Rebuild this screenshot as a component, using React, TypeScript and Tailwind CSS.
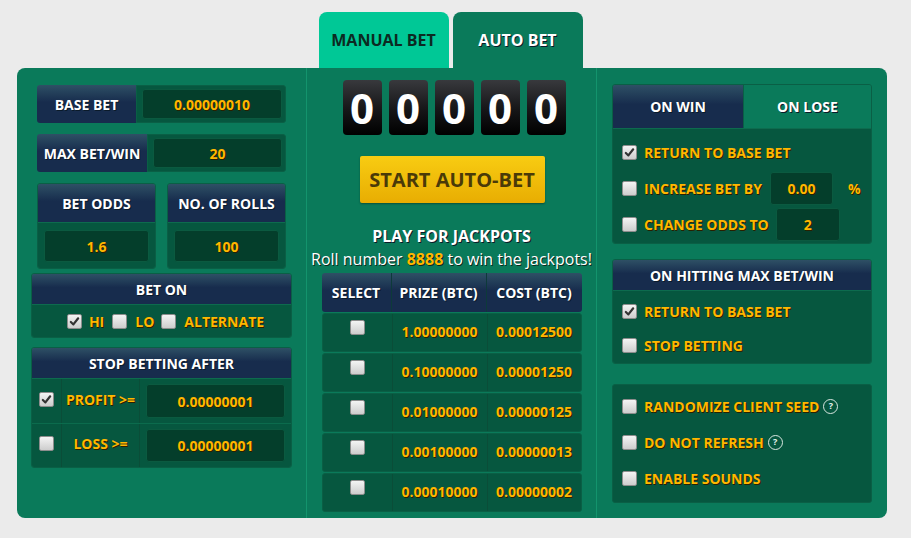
import React from 'react'

const font = "font-['Open_Sans',sans-serif]"
const navy = 'bg-[linear-gradient(#2e5065,#172c4d_45%)]'
const orange = 'text-[#ffb700] [text-shadow:1px_1px_0_#2a2000]'
const white = 'text-white [text-shadow:1px_1px_0_#0a1a2a]'

function Check({ checked = false }: { checked?: boolean }) {
  return (
    <span className="relative flex h-[15px] w-[15px] shrink-0 items-center justify-center rounded-[2px] border border-[#8d8d8d] bg-[linear-gradient(#f4f4f4,#cdcdcd)]">
      {checked && (
        <svg viewBox="0 0 12 12" className="h-[11px] w-[11px]">
          <path d="M2 6.5 L4.8 9.2 L10 2.5" fill="none" stroke="#333" strokeWidth="2.4" strokeLinecap="round" strokeLinejoin="round" />
        </svg>
      )}
    </span>
  )
}

function Input({ value, className = '' }: { value: string; className?: string }) {
  return (
    <div className={`flex items-center justify-center rounded-[3px] border border-[#0b5a40] bg-[#043e2b] text-[14px] font-bold ${orange} ${className}`}>
      {value}
    </div>
  )
}

function Help() {
  return (
    <span className="ml-[4px] inline-flex h-[15px] w-[15px] items-center justify-center rounded-full border border-[#d8e6e0] text-[9px] font-bold text-[#e8f4f0] [text-shadow:none]">
      ?
    </span>
  )
}

function Option({ checked = false, label, short = false, children }: { checked?: boolean; label: string; short?: boolean; children?: React.ReactNode }) {
  return (
    <div className={`flex items-center ${short ? 'h-[35px]' : 'h-[36px]'}`}>
      <Check checked={checked} />
      <span className={`ml-[7px] text-[14px] font-bold ${orange}`}>{label}</span>
      {children}
    </div>
  )
}

const jackpots = [
  ['1.00000000', '0.00012500'],
  ['0.10000000', '0.00001250'],
  ['0.01000000', '0.00000125'],
  ['0.00100000', '0.00000013'],
  ['0.00010000', '0.00000002'],
]

export default function App() {
  return (
    <div className={`min-h-[538px] w-[911px] bg-[#ebebeb] pt-[12px] pl-[17px] ${font}`}>
      {/* tabs */}
      <div className="flex w-[870px] justify-center gap-[4px] pr-[3px]">
        <div className="flex h-[56px] w-[130px] items-center justify-center rounded-t-[8px] bg-[#00c896] text-[16px] font-bold text-[#0c2a22]">
          MANUAL BET
        </div>
        <div className={`flex h-[56px] w-[130px] items-center justify-center rounded-t-[8px] bg-[#0a7a5a] text-[16px] font-bold ${white}`}>
          AUTO BET
        </div>
      </div>

      {/* panel */}
      <div className="flex h-[450px] w-[870px] rounded-[8px] bg-[#0a7a5a]">
        {/* left column */}
        <div className="flex w-[290px] flex-col border-r border-[#13946d] px-[14px] pt-[17px]">
          <div className="mx-[6px] flex h-[38px]">
            <div className={`flex w-[99px] items-center justify-center rounded-l-[3px] text-[14px] font-bold ${navy} ${white}`}>BASE BET</div>
            <div className="flex flex-1 rounded-r-[3px] border border-[#0a5f45] bg-[#06573f] p-[3px] pl-[5px]">
              <Input value="0.00000010" className="flex-1" />
            </div>
          </div>
          <div className="mx-[6px] mt-[11px] flex h-[38px]">
            <div className={`flex w-[110px] items-center justify-center rounded-l-[3px] text-[14px] font-bold ${navy} ${white}`}>MAX BET/WIN</div>
            <div className="flex flex-1 rounded-r-[3px] border border-[#0a5f45] bg-[#06573f] p-[3px] pl-[5px]">
              <Input value="20" className="flex-1" />
            </div>
          </div>
          <div className="mx-[6px] mt-[11px] flex gap-[11px]">
            {[
              ['BET ODDS', '1.6'],
              ['NO. OF ROLLS', '100'],
            ].map(([t, v]) => (
              <div key={t} className="flex-1 overflow-hidden rounded-[3px] border border-[#0a5f45]">
                <div className={`flex h-[39px] items-center justify-center border-b border-[#0d6b4e] text-[14px] font-bold ${navy} ${white}`}>{t}</div>
                <div className="h-[45px] bg-[#06573f] px-[6px] pt-[7px]">
                  <Input value={v} className="h-[32px]" />
                </div>
              </div>
            ))}
          </div>

          <div className="mt-[4px] overflow-hidden rounded-[3px] border border-[#0a5f45]">
            <div className={`flex h-[31px] items-center justify-center border-b border-[#0d6b4e] text-[14px] font-bold ${navy} ${white}`}>BET ON</div>
            <div className="flex h-[32px] items-center justify-center bg-[#06573f] pl-[8px]">
              <Check checked />
              <span className={`ml-[7px] text-[14px] font-bold ${orange}`}>HI</span>
              <span className="ml-[8px] flex"><Check /></span>
              <span className={`ml-[8px] text-[14px] font-bold ${orange}`}>LO</span>
              <span className="ml-[7px] flex"><Check /></span>
              <span className={`ml-[8px] text-[14px] font-bold ${orange}`}>ALTERNATE</span>
            </div>
          </div>

          <div className="mt-[9px] overflow-hidden rounded-[3px] border border-[#0a5f45]">
            <div className={`flex h-[31px] items-center justify-center border-b border-[#0d6b4e] text-[14px] font-bold ${navy} ${white}`}>STOP BETTING AFTER</div>
            {[
              ['PROFIT >=', true],
              ['LOSS >=', false],
            ].map(([l, c], i) => (
              <div key={l as string} className={`flex h-[44px] bg-[#06573f] ${i ? 'border-t border-[#0b6b4d]' : ''}`}>
                <div className="flex w-[30px] items-center justify-center border-r border-[#0a4d38] pb-[4px]">
                  <Check checked={c as boolean} />
                </div>
                <div className={`flex w-[78px] items-center justify-center border-r border-[#0a4d38] pb-[4px] text-[14px] font-bold ${orange}`}>{l as string}</div>
                <div className="flex flex-1 px-[6px] py-[5px]">
                  <Input value="0.00000001" className="flex-1" />
                </div>
              </div>
            ))}
          </div>
        </div>

        {/* center column */}
        <div className="flex w-[290px] flex-col items-center border-r border-[#13946d] pt-[12px]">
          <div className="ml-[5px] flex gap-[7px]">
            {[0, 1, 2, 3, 4].map((i) => (
              <div key={i} className="flex h-[55px] w-[39px] items-center justify-center rounded-[4px] bg-[linear-gradient(#38393d,#18181a_50%,#000)] text-[42px] leading-none font-bold text-white">
                0
              </div>
            ))}
          </div>
          <button className="mt-[21px] ml-[1px] flex h-[47px] w-[185px] items-center justify-center rounded-[2px] bg-[linear-gradient(#f8cc12,#e8ad02)] text-[20px] font-bold text-[#4a3a08] shadow-[0_1px_2px_rgba(0,0,0,0.35)]">
            START AUTO-BET
          </button>
          <div className={`mt-[22px] text-[16px] leading-[22px] font-bold ${white}`}>PLAY FOR JACKPOTS</div>
          <div className="mt-[1px] text-[16px] leading-[22px] text-white [text-shadow:1px_1px_0_#0a2a1e]">
            Roll number <span className="font-bold text-[#ffb700]">8888</span> to win the jackpots!
          </div>
          <div className="mt-[3px] flex w-[260px] flex-col gap-[1px]">
            <div className={`flex h-[39px] rounded-[3px] text-[14px] font-bold ${navy} ${white}`}>
              <div className="flex w-[70px] items-center justify-center border-r border-[#0d3a3a]">SELECT</div>
              <div className="flex w-[95px] items-center justify-center border-r border-[#0d3a3a]">PRIZE (BTC)</div>
              <div className="flex flex-1 items-center justify-center">COST (BTC)</div>
            </div>
            {jackpots.map(([p, c]) => (
              <div key={p} className={`flex h-[39px] rounded-[3px] border border-[#0a5f45] bg-[#06573f] text-[14px] font-bold ${orange}`}>
                <div className="flex w-[70px] items-start justify-center border-r border-[#0a4d38] pt-[6px]">
                  <Check />
                </div>
                <div className="flex w-[95px] items-center justify-center border-r border-[#0a4d38] pb-[2px]">{p}</div>
                <div className="flex flex-1 items-center justify-center pb-[2px]">{c}</div>
              </div>
            ))}
          </div>
        </div>

        {/* right column */}
        <div className="flex w-[290px] flex-col px-[15px] pt-[16px]">
          <div className="overflow-hidden rounded-[3px] border border-[#0a5f45]">
            <div className="flex h-[44px] border-b border-[#0d6b4e]">
              <div className={`flex w-[130px] items-center justify-center text-[14px] font-bold ${navy} ${white}`}>ON WIN</div>
              <div className={`flex flex-1 items-center justify-center border-l border-[#0a5f45] bg-[#0a7a5a] text-[14px] font-bold ${white}`}>ON LOSE</div>
            </div>
            <div className="flex h-[114px] flex-col bg-[#06573f] px-[9px] pt-[5px]">
              <Option checked label="RETURN TO BASE BET" />
              <div className="flex h-[36px] items-center">
                <Check />
                <span className={`ml-[7px] text-[14px] font-bold ${orange}`}>INCREASE BET BY</span>
                <Input value="0.00" className="ml-[8px] h-[33px] w-[63px]" />
                <span className={`ml-[15px] text-[14px] font-bold ${orange}`}>%</span>
              </div>
              <div className="flex h-[36px] items-center">
                <Check />
                <span className={`ml-[7px] text-[14px] font-bold ${orange}`}>CHANGE ODDS TO</span>
                <Input value="2" className="ml-[7px] h-[33px] w-[64px]" />
              </div>
            </div>
          </div>

          <div className="mt-[15px] overflow-hidden rounded-[3px] border border-[#0a5f45]">
            <div className={`flex h-[31px] items-center justify-center border-b border-[#0d6b4e] text-[14px] font-bold ${navy} ${white}`}>ON HITTING MAX BET/WIN</div>
            <div className="flex h-[72px] flex-col bg-[#06573f] px-[9px] pt-[3px]">
              <Option checked short label="RETURN TO BASE BET" />
              <Option short label="STOP BETTING" />
            </div>
          </div>

          <div className="mt-[20px] flex h-[119px] flex-col rounded-[3px] border border-[#0a5f45] bg-[#06573f] px-[9px] pt-[3px]">
            <Option label="RANDOMIZE CLIENT SEED">
              <Help />
            </Option>
            <Option label="DO NOT REFRESH">
              <Help />
            </Option>
            <Option label="ENABLE SOUNDS" />
          </div>
        </div>
      </div>
    </div>
  )
}
